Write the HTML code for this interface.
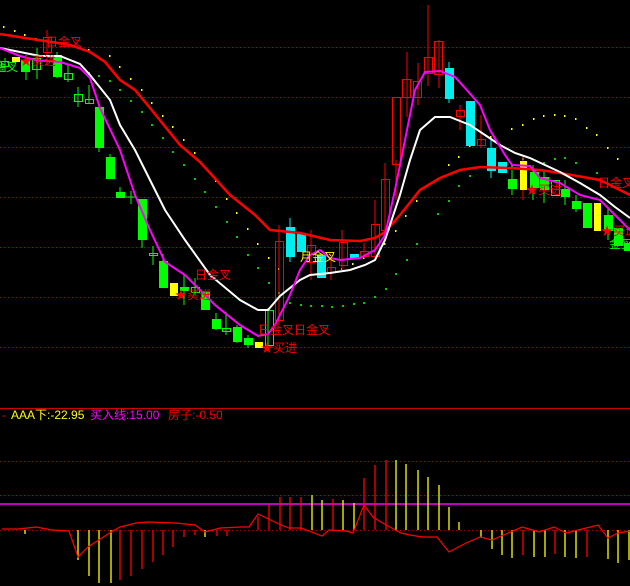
<!DOCTYPE html>
<html><head><meta charset="utf-8"><style>
html,body{margin:0;padding:0;background:#000;width:630px;height:586px;overflow:hidden}
svg{display:block}
text{font-family:"Liberation Sans","Noto Sans CJK SC",sans-serif;font-size:12px}
</style></head><body>
<svg width="630" height="586" viewBox="0 0 630 586" xmlns="http://www.w3.org/2000/svg">
<g stroke="#a00" stroke-dasharray="1,3" stroke-width="1">
<line x1="0" y1="47.5" x2="630" y2="47.5"/><line x1="0" y1="97.5" x2="630" y2="97.5"/>
<line x1="0" y1="147.5" x2="630" y2="147.5"/><line x1="0" y1="197.5" x2="630" y2="197.5"/>
<line x1="0" y1="247.5" x2="630" y2="247.5"/><line x1="0" y1="297.5" x2="630" y2="297.5"/>
<line x1="0" y1="347.5" x2="630" y2="347.5"/>
<line x1="0" y1="461.5" x2="630" y2="461.5"/><line x1="0" y1="495.5" x2="630" y2="495.5"/>
<line x1="0" y1="530.5" x2="630" y2="530.5"/>
</g>
<line x1="0" y1="408.5" x2="630" y2="408.5" stroke="#c00"/>
<line x1="0" y1="504" x2="630" y2="504" stroke="#f0f" stroke-width="1.5"/>

<g fill="#ff0">
<rect x="3" y="26" width="1.5" height="2"/><rect x="14" y="30" width="1.5" height="2"/><rect x="24" y="34" width="1.5" height="2"/><rect x="35" y="38" width="1.5" height="2"/><rect x="88" y="49" width="1.5" height="2"/><rect x="109" y="55" width="1.5" height="2"/><rect x="119" y="66" width="1.5" height="2"/><rect x="130" y="78" width="1.5" height="2"/><rect x="141" y="89" width="1.5" height="2"/><rect x="151" y="102" width="1.5" height="2"/><rect x="162" y="115" width="1.5" height="2"/><rect x="172" y="126" width="1.5" height="2"/><rect x="183" y="139" width="1.5" height="2"/><rect x="194" y="152" width="1.5" height="2"/><rect x="204" y="166" width="1.5" height="2"/><rect x="215" y="180" width="1.5" height="2"/><rect x="226" y="198" width="1.5" height="2"/><rect x="236" y="212" width="1.5" height="2"/><rect x="247" y="228" width="1.5" height="2"/><rect x="257" y="243" width="1.5" height="2"/><rect x="268" y="257" width="1.5" height="2"/><rect x="278" y="268" width="1.5" height="2"/>
<rect x="320" y="270" width="1.5" height="2"/><rect x="341" y="268" width="1.5" height="2"/><rect x="352" y="263" width="1.5" height="2"/><rect x="363" y="257" width="1.5" height="2"/><rect x="374" y="250" width="1.5" height="2"/><rect x="384" y="243" width="1.5" height="2"/><rect x="395" y="230" width="1.5" height="2"/><rect x="405" y="215" width="1.5" height="2"/><rect x="416" y="200" width="1.5" height="2"/><rect x="437" y="178" width="1.5" height="2"/><rect x="448" y="164" width="1.5" height="2"/><rect x="458" y="156" width="1.5" height="2"/><rect x="469" y="145" width="1.5" height="2"/><rect x="490" y="136" width="1.5" height="2"/><rect x="511" y="128" width="1.5" height="2"/><rect x="522" y="124" width="1.5" height="2"/><rect x="533" y="118" width="1.5" height="2"/><rect x="543" y="115" width="1.5" height="2"/><rect x="554" y="114" width="1.5" height="2"/><rect x="564" y="115" width="1.5" height="2"/><rect x="575" y="118" width="1.5" height="2"/><rect x="586" y="127" width="1.5" height="2"/><rect x="596" y="134" width="1.5" height="2"/><rect x="607" y="147" width="1.5" height="2"/><rect x="617" y="158" width="1.5" height="2"/>
</g>
<g fill="#0c0">
<rect x="88" y="72" width="2" height="2"/><rect x="98" y="75" width="2" height="2"/><rect x="109" y="80" width="2" height="2"/><rect x="119" y="89" width="2" height="2"/><rect x="130" y="100" width="2" height="2"/><rect x="141" y="111" width="2" height="2"/><rect x="151" y="124" width="2" height="2"/><rect x="162" y="137" width="2" height="2"/><rect x="172" y="151" width="2" height="2"/><rect x="183" y="164" width="2" height="2"/><rect x="194" y="178" width="2" height="2"/><rect x="204" y="191" width="2" height="2"/><rect x="215" y="206" width="2" height="2"/><rect x="226" y="221" width="2" height="2"/><rect x="236" y="236" width="2" height="2"/><rect x="247" y="254" width="2" height="2"/><rect x="257" y="267" width="2" height="2"/><rect x="268" y="282" width="2" height="2"/><rect x="278" y="292" width="2" height="2"/><rect x="289" y="302" width="2" height="2"/><rect x="300" y="304" width="2" height="2"/>
<rect x="310" y="305" width="2" height="2"/><rect x="321" y="305" width="2" height="2"/><rect x="331" y="306" width="2" height="2"/><rect x="342" y="305" width="2" height="2"/><rect x="353" y="303" width="2" height="2"/><rect x="363" y="302" width="2" height="2"/><rect x="374" y="296" width="2" height="2"/><rect x="385" y="288" width="2" height="2"/><rect x="395" y="273" width="2" height="2"/><rect x="406" y="259" width="2" height="2"/><rect x="416" y="243" width="2" height="2"/><rect x="437" y="213" width="2" height="2"/><rect x="448" y="200" width="2" height="2"/><rect x="458" y="185" width="2" height="2"/><rect x="469" y="175" width="2" height="2"/><rect x="490" y="167" width="2" height="2"/><rect x="501" y="166" width="2" height="2"/><rect x="511" y="165" width="2" height="2"/><rect x="522" y="158" width="2" height="2"/><rect x="543" y="162" width="2" height="2"/><rect x="554" y="158" width="2" height="2"/><rect x="564" y="157" width="2" height="2"/><rect x="575" y="162" width="2" height="2"/><rect x="596" y="172" width="2" height="2"/>
</g>

<g stroke-width="1">
<g stroke="#0f0" fill="none">
<line x1="5" y1="58" x2="5" y2="72"/><rect x="1.5" y="61.5" width="7" height="5"/>
<line x1="26" y1="55" x2="26" y2="80"/><rect x="21.5" y="60.5" width="8" height="11" fill="#0f0"/>
<line x1="37" y1="48" x2="37" y2="79"/><rect x="32.5" y="58.5" width="8" height="11"/>
<line x1="57" y1="52" x2="57" y2="78"/><rect x="53.5" y="55.5" width="8" height="21" fill="#0f0"/>
<line x1="68" y1="64" x2="68" y2="82"/><rect x="64.5" y="73.5" width="8" height="6"/>
<line x1="78" y1="87" x2="78" y2="107"/><rect x="74.5" y="94.5" width="8" height="7"/>
<line x1="89" y1="85" x2="89" y2="104"/><rect x="85.5" y="99.5" width="8" height="4"/>
<line x1="99" y1="105" x2="99" y2="152"/><rect x="95.5" y="107.5" width="8" height="40" fill="#0f0"/>
<line x1="110" y1="154" x2="110" y2="178"/><rect x="106.5" y="157.5" width="8" height="21" fill="#0f0"/>
<line x1="120" y1="187" x2="120" y2="198"/><rect x="116.5" y="192.5" width="8" height="5" fill="#0f0"/>
<line x1="131" y1="191" x2="131" y2="204"/><line x1="126" y1="197" x2="136" y2="197"/>
<line x1="142" y1="199" x2="142" y2="248"/><rect x="138.5" y="199.5" width="8" height="40" fill="#0f0"/>
<line x1="153" y1="246" x2="153" y2="265"/><rect x="149.5" y="253.5" width="8" height="2"/>
<line x1="163" y1="254" x2="163" y2="288"/><rect x="159.5" y="261.5" width="8" height="26" fill="#0f0"/>
<line x1="184" y1="275" x2="184" y2="305"/><rect x="180.5" y="287.5" width="8" height="3" fill="#0f0"/>
<line x1="195" y1="278" x2="195" y2="295"/><rect x="191.5" y="287.5" width="8" height="5"/>
<rect x="201.5" y="292.5" width="8" height="17" fill="#0f0"/>
<line x1="216" y1="313" x2="216" y2="330"/><rect x="212.5" y="319.5" width="8" height="9" fill="#0f0"/>
<line x1="226" y1="312" x2="226" y2="335"/><rect x="222.5" y="328.5" width="8" height="3"/>
<line x1="237" y1="325" x2="237" y2="343"/><rect x="233.5" y="327.5" width="8" height="14" fill="#0f0"/>
<line x1="248" y1="335" x2="248" y2="348"/><rect x="244.5" y="338.5" width="8" height="6" fill="#0f0"/>
<line x1="268" y1="308" x2="268" y2="346"/><rect x="265.5" y="310.5" width="8" height="35"/>
<line x1="512" y1="170" x2="512" y2="195"/><rect x="508.5" y="179.5" width="8" height="9" fill="#0f0"/>
<line x1="533" y1="165" x2="533" y2="200"/><rect x="530.5" y="172.5" width="8" height="15" fill="#0f0"/>
<line x1="544" y1="170" x2="544" y2="203"/><rect x="540.5" y="177.5" width="8" height="12" fill="#0f0"/>
<rect x="551.5" y="180.5" width="8" height="15"/>
<line x1="565" y1="180" x2="565" y2="205"/><rect x="561.5" y="189.5" width="8" height="7" fill="#0f0"/>
<line x1="576" y1="195" x2="576" y2="212"/><rect x="572.5" y="201.5" width="8" height="7" fill="#0f0"/>
<rect x="583.5" y="203.5" width="8" height="24" fill="#0f0"/>
<line x1="608" y1="208" x2="608" y2="240"/><rect x="604.5" y="215.5" width="8" height="15" fill="#0f0"/>
<rect x="614.5" y="228.5" width="8" height="17" fill="#0f0"/>
<rect x="624.5" y="243.5" width="6" height="7" fill="#0f0"/>
</g>
<g stroke="#f00" fill="none">
<line x1="47" y1="30" x2="47" y2="66"/><rect x="43.5" y="37.5" width="8" height="15"/>
<line x1="279" y1="225" x2="279" y2="325"/><rect x="275.5" y="241.5" width="8" height="79"/>
<line x1="311" y1="230" x2="311" y2="280"/><rect x="307.5" y="245.5" width="8" height="17"/>
<line x1="331" y1="260" x2="331" y2="280"/><rect x="327.5" y="267.5" width="8" height="5"/>
<line x1="342" y1="230" x2="342" y2="270"/><rect x="339.5" y="242.5" width="8" height="23"/>
<line x1="364" y1="243" x2="364" y2="258"/><rect x="360.5" y="251.5" width="8" height="5"/>
<line x1="375" y1="200" x2="375" y2="258"/><rect x="371.5" y="224.5" width="8" height="32"/>
<line x1="385" y1="163" x2="385" y2="240"/><rect x="381.5" y="179.5" width="8" height="51"/>
<line x1="396" y1="160" x2="396" y2="200"/><rect x="392.5" y="97.5" width="8" height="67"/>
<line x1="407" y1="52" x2="407" y2="117"/><rect x="402.5" y="79.5" width="8" height="18"/>
<line x1="418" y1="63" x2="418" y2="105"/><rect x="413.5" y="81.5" width="8" height="16"/>
<line x1="428" y1="5" x2="428" y2="86"/><rect x="424.5" y="57.5" width="8" height="16"/>
<line x1="439" y1="40" x2="439" y2="88"/><rect x="434.5" y="41.5" width="8" height="33"/>
<line x1="460" y1="105" x2="460" y2="130"/><rect x="456.5" y="110.5" width="8" height="6"/>
<line x1="481" y1="115" x2="481" y2="148"/><rect x="477.5" y="139.5" width="8" height="6"/>
<line x1="523" y1="155" x2="523" y2="200"/>
</g>
<g fill="#0ee" stroke="#0ee">
<rect x="286.5" y="227.5" width="8" height="29"/><line x1="290" y1="218" x2="290" y2="262"/>
<rect x="297.5" y="234.5" width="8" height="17"/>
<rect x="317.5" y="255.5" width="8" height="22"/>
<rect x="350.5" y="254.5" width="8" height="3"/>
<rect x="445.5" y="68.5" width="8" height="30"/><line x1="449" y1="62" x2="449" y2="103"/>
<rect x="466.5" y="101.5" width="8" height="44"/>
<rect x="487.5" y="148.5" width="8" height="22"/><line x1="491" y1="140" x2="491" y2="178"/>
<rect x="498.5" y="162.5" width="8" height="10"/>
</g>
<g fill="#ff0" stroke="#ff0">
<rect x="12.5" y="57.5" width="7" height="4"/>
<rect x="170.5" y="283.5" width="7" height="12"/>
<rect x="255.5" y="342.5" width="7" height="5"/>
<rect x="520.5" y="161.5" width="6" height="28"/>
<rect x="594.5" y="203.5" width="6" height="27"/>
</g>
</g>

<polyline fill="none" stroke="#f00" stroke-width="2.5" points="0,34 25,38 45,41 70,45 90,52 105,62 120,80 135,90 150,108 180,145 200,162 230,195 255,215 270,230 300,233 330,240 360,241 375,238 385,232 400,215 420,190 440,178 460,170 480,167 510,168 540,170 560,173 600,180 630,195"/>
<polyline fill="none" stroke="#fff" stroke-width="2" points="0,48 20,52 40,56 60,56 80,64 90,75 110,100 120,125 135,150 150,180 165,210 185,240 210,275 240,300 258,310 268,310 280,296 300,280 310,275 330,273 350,270 365,265 375,260 385,240 400,195 410,160 420,130 435,117 450,117 470,125 485,135 500,145 515,153 530,158 560,172 580,183 600,195 615,207 630,218"/>
<polyline fill="none" stroke="#f0f" stroke-width="2" points="0,48 20,56 35,60 60,62 80,68 90,78 100,108 120,150 135,195 150,230 165,262 185,275 200,290 215,305 240,325 258,336 268,334 275,325 290,295 300,270 310,255 320,250 330,258 340,260 360,258 375,250 385,235 395,190 405,140 415,90 425,72 440,71 455,77 465,88 480,105 490,130 505,155 512,165 530,166 540,178 560,183 580,195 600,200 615,215 630,230"/>

<g fill="#f00">
<text x="46" y="46">日金叉</text><text x="20" y="65">★买进</text>
<text x="195" y="279">日金叉</text><text x="175" y="299">★买进</text>
<text x="258" y="334">日金叉日金叉</text><text x="261" y="352">★买进</text>
<text x="598" y="187">日金叉</text><text x="526" y="194">★买进</text>
<text x="601" y="235">★买进</text>
</g>
<text x="-6" y="71" fill="#0f0">金叉</text>
<text x="609" y="248" fill="#0f0">金叉</text>
<text x="300" y="261" fill="#ff0">月金叉</text>

<text x="2" y="419" fill="#f00">-</text>
<text x="11" y="419" fill="#ff0">AAA下:-22.95</text>
<text x="90" y="419" fill="#f0f">买入线:15.00</text>
<text x="168" y="419" fill="#f00">房子:-0.50</text>
<g stroke-width="1.3">
<g stroke="#ff0">
<line x1="78" y1="530" x2="78" y2="560"/><line x1="89" y1="530" x2="89" y2="576"/><line x1="99" y1="530" x2="99" y2="583"/><line x1="111" y1="530" x2="111" y2="583"/>
<line x1="312" y1="530" x2="312" y2="495"/><line x1="322" y1="530" x2="322" y2="500"/><line x1="343" y1="530" x2="343" y2="500"/><line x1="354" y1="530" x2="354" y2="503"/>
<line x1="396" y1="530" x2="396" y2="460"/><line x1="406" y1="530" x2="406" y2="464"/><line x1="418" y1="530" x2="418" y2="470"/><line x1="428" y1="530" x2="428" y2="477"/><line x1="439" y1="530" x2="439" y2="485"/><line x1="449" y1="530" x2="449" y2="507"/><line x1="459" y1="530" x2="459" y2="522"/>
<line x1="481" y1="530" x2="481" y2="537"/><line x1="492" y1="530" x2="492" y2="549"/><line x1="502" y1="530" x2="502" y2="555"/><line x1="512" y1="530" x2="512" y2="558"/><line x1="534" y1="530" x2="534" y2="557"/><line x1="545" y1="530" x2="545" y2="557"/><line x1="565" y1="530" x2="565" y2="557"/><line x1="576" y1="530" x2="576" y2="558"/><line x1="608" y1="530" x2="608" y2="559"/><line x1="618" y1="530" x2="618" y2="563"/><line x1="629" y1="530" x2="629" y2="560"/>
<line x1="25" y1="530" x2="25" y2="534"/><line x1="205" y1="530" x2="205" y2="537"/>
</g>
<g stroke="#f00">
<line x1="120" y1="530" x2="120" y2="580"/><line x1="131" y1="530" x2="131" y2="576"/><line x1="142" y1="530" x2="142" y2="569"/><line x1="153" y1="530" x2="153" y2="562"/><line x1="163" y1="530" x2="163" y2="555"/><line x1="173" y1="530" x2="173" y2="547"/><line x1="184" y1="530" x2="184" y2="537"/><line x1="195" y1="530" x2="195" y2="535"/><line x1="217" y1="530" x2="217" y2="536"/><line x1="227" y1="530" x2="227" y2="536"/>
<line x1="258" y1="530" x2="258" y2="517"/><line x1="269" y1="530" x2="269" y2="505"/><line x1="280" y1="530" x2="280" y2="497"/><line x1="290" y1="530" x2="290" y2="497"/><line x1="301" y1="530" x2="301" y2="497"/><line x1="333" y1="530" x2="333" y2="499"/>
<line x1="364" y1="530" x2="364" y2="478"/><line x1="375" y1="530" x2="375" y2="465"/><line x1="386" y1="530" x2="386" y2="460"/>
<line x1="523" y1="530" x2="523" y2="555"/><line x1="555" y1="530" x2="555" y2="554"/><line x1="587" y1="530" x2="587" y2="557"/>
</g>
</g>
<polyline fill="none" stroke="#f00" stroke-width="1.2" points="2,529 18,529 36,527 52,530 69,531 78,557 88,547 111,532 120,527 136,523 148,522 175,523 195,525 205,532 220,528 241,527 249,527 258,514 281,525 289,528 301,528 322,536 329,530 346,531 353,533 364,505 373,517 386,525 401,533 410,535 422,537 437,537 449,552 466,543 480,537 492,540 522,527 539,532 554,527 566,533 578,530 598,525 608,538 618,533 630,531"/>
</svg>
</body></html>
